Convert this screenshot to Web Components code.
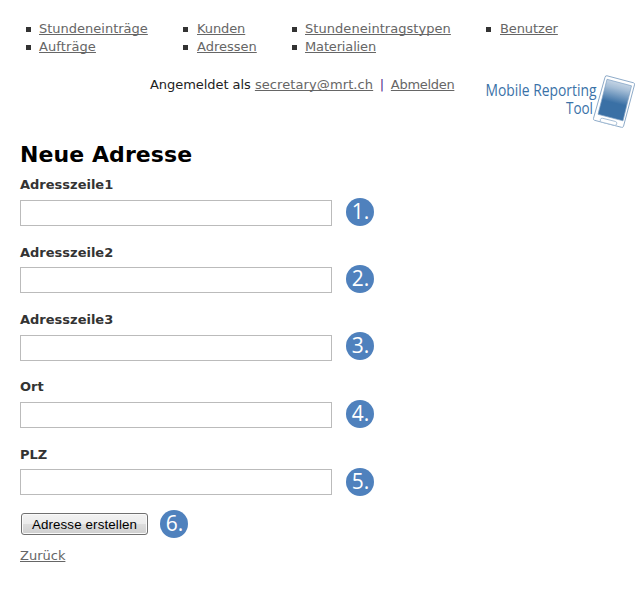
<!DOCTYPE html>
<html lang="de">
<head>
<meta charset="utf-8">
<title>Neue Adresse</title>
<style>
body { margin: 0; background: #fff; color: #333; font: 13px/18px Verdana, "DejaVu Sans", sans-serif; }
</style>
</head>
<body>
<address-page></address-page>
<script>
const define = (name, html, setup) => {
  const template = document.createElement('template');
  template.innerHTML = html;
  customElements.define(name, class extends HTMLElement {
    constructor() {
      super();
      this.attachShadow({ mode: 'open' }).append(template.content.cloneNode(true));
    }
    connectedCallback() { if (setup) setup(this, this.shadowRoot); }
  });
};

define('text-link', `
<style>
:host { display: inline; }
a { color: #666; text-decoration: underline; text-decoration-thickness: 1px; text-underline-offset: 1px; text-decoration-skip-ink: none; white-space: nowrap; }
</style><a href="#"><slot></slot></a>`);

define('nav-item', `
<style>
:host { display: flex; align-items: center; height: 18px; gap: var(--gap, 8px); }
i { width: 5px; height: 5px; background: #333; flex: none; }
</style><i></i><text-link><slot></slot></text-link>`);

define('nav-column', `
<style>:host { display: flex; flex-direction: column; }</style><slot></slot>`);

define('main-nav', `
<style>
:host { display: grid; grid-template-columns: 157px 109px 194px auto; padding: 20px 0 0 26px; }
.wide { --gap: 9px; }
</style>
<nav-column><nav-item>Stundeneinträge</nav-item><nav-item style="letter-spacing:.1px">Aufträge</nav-item></nav-column>
<nav-column class="wide"><nav-item style="letter-spacing:-.1px">Kunden</nav-item><nav-item>Adressen</nav-item></nav-column>
<nav-column><nav-item style="letter-spacing:.05px">Stundeneintragstypen</nav-item><nav-item style="letter-spacing:-.15px">Materialien</nav-item></nav-column>
<nav-column class="wide"><nav-item style="letter-spacing:-.1px">Benutzer</nav-item></nav-column>`);

define('brand-logo', `
<style>:host { display: block; width: 154px; height: 58px; } svg { display: block; }
text { font-family: "Open Sans", "Noto Sans", sans-serif; font-weight: 400; font-size: 17px; fill: #3b72a8; }</style>
<svg width="154" height="58" viewBox="0 0 154 58">
<defs><linearGradient id="screen" x1="0.6" y1="0" x2="0.4" y2="1"><stop offset="0" stop-color="#d4dfeb"/><stop offset=".22" stop-color="#a4bdd6"/><stop offset=".57" stop-color="#3a70a5"/><stop offset="1" stop-color="#3a70a5"/></linearGradient></defs>
<text x="0.500" y="23" textLength="111" lengthAdjust="spacingAndGlyphs">Mobile Reporting</text>
<text x="81" y="41" textLength="27" lengthAdjust="spacingAndGlyphs">Tool</text>
<g transform="translate(-.500 -.700)">
<path d="M122.500 3.500 149 10.500Q150.500 11 150 12.500L139 54Q138.500 55.500 137 55L110 48Q108.500 47.500 109 46L120.500 5Q121 3 122.500 3.500Z" fill="#fff" stroke="#8eabc9" stroke-width="1"/>
<path d="M122.500 7 147 13.500 138.500 48.500 113.500 42Z" fill="url(#screen)" stroke="#7c9fc3" stroke-width=".7"/>
<rect x="115.500" y="47.500" width="17" height="4" rx="2" fill="#fff" stroke="#9bb5d0" stroke-width=".8" transform="rotate(14 124 49.500)"/>
</g>
</svg>`);

define('session-bar', `
<style>
:host { display: flex; align-items: flex-start; justify-content: space-between; height: 68px; padding: 17px 0 0 150px; box-sizing: border-box; }
p { margin: 3px 0 0; white-space: nowrap; color: #222; }
.who { letter-spacing: -.05px; }
.mail { letter-spacing: .1px; }
.bar { color: #551a8b; margin: 0 2.500px; }
.out { letter-spacing: -.3px; }
</style>
<p><span class="who">Angemeldet als </span><text-link class="mail">secretary@mrt.ch</text-link> <span class="bar">|</span> <text-link class="out">Abmelden</text-link></p>
<brand-logo></brand-logo>`);

define('step-badge', `
<style>
:host { display: block; width: 28px; height: 28px; flex: none; border-radius: 50%; background: #4f81bd; color: #fff; text-align: center; font: 21px/27px "Open Sans", "Noto Sans", sans-serif; text-indent: 1px; }
</style><slot></slot>`);

define('form-field', `
<style>
:host { display: block; height: 67.35px; }
label { display: block; font-weight: bold; height: 24px; box-sizing: border-box; padding-top: .2px; }
div { display: flex; align-items: center; height: 26px; gap: 14px; }
input { width: 312px; height: 26px; box-sizing: border-box; border: 1px solid #bbb; margin: 0; padding: 0 5px; background: #fff; font: inherit; flex: none; }
step-badge { margin-top: var(--lift, -3px); }
:host([step="5."]) { --lift: 0px; }
:host([step="2."]), :host([step="4."]) { --lift: -2px; }
</style>
<label for="field"></label><div><input id="field" type="text"><step-badge></step-badge></div>`,
(host, root) => {
  root.querySelector('label').textContent = host.getAttribute('label');
  root.querySelector('step-badge').textContent = host.getAttribute('step');
});

define('push-button', `
<style>
:host { display: block; }
button { display: block; width: 127px; height: 22px; box-sizing: border-box; padding: 2px 0 0; border: 1px solid #707070; border-radius: 3px; box-shadow: inset 0 0 0 1px #fafafa; background: linear-gradient(#f2f2f2, #ebebeb 50%, #dddddd 50%, #cfcfcf); color: #000; font: 13.330px/18px "Liberation Sans", Arial, sans-serif; letter-spacing: .13px; white-space: nowrap; }
</style><button type="button"><slot></slot></button>`);

define('address-form', `
<style>
:host { display: block; padding: 17px 20px 0; }
h1 { margin: 0 0 7px; font-size: 22px; line-height: 28px; color: #000; white-space: nowrap; letter-spacing: .08px; }
.actions { display: flex; align-items: center; gap: 12px; height: 28px; padding-left: 1px; margin: -3px 0 9px; }
</style>
<h1>Neue Adresse</h1>
<form-field label="Adresszeile1" step="1."></form-field>
<form-field label="Adresszeile2" step="2."></form-field>
<form-field label="Adresszeile3" step="3."></form-field>
<form-field label="Ort" step="4."></form-field>
<form-field label="PLZ" step="5."></form-field>
<div class="actions"><push-button>Adresse erstellen</push-button><step-badge>6.</step-badge></div>
<text-link>Zurück</text-link>`);

define('address-page', `
<style>:host { display: block; width: 639px; height: 599px; overflow: hidden; }</style>
<main-nav></main-nav>
<session-bar></session-bar>
<address-form></address-form>`);
</script>
</body>
</html>
